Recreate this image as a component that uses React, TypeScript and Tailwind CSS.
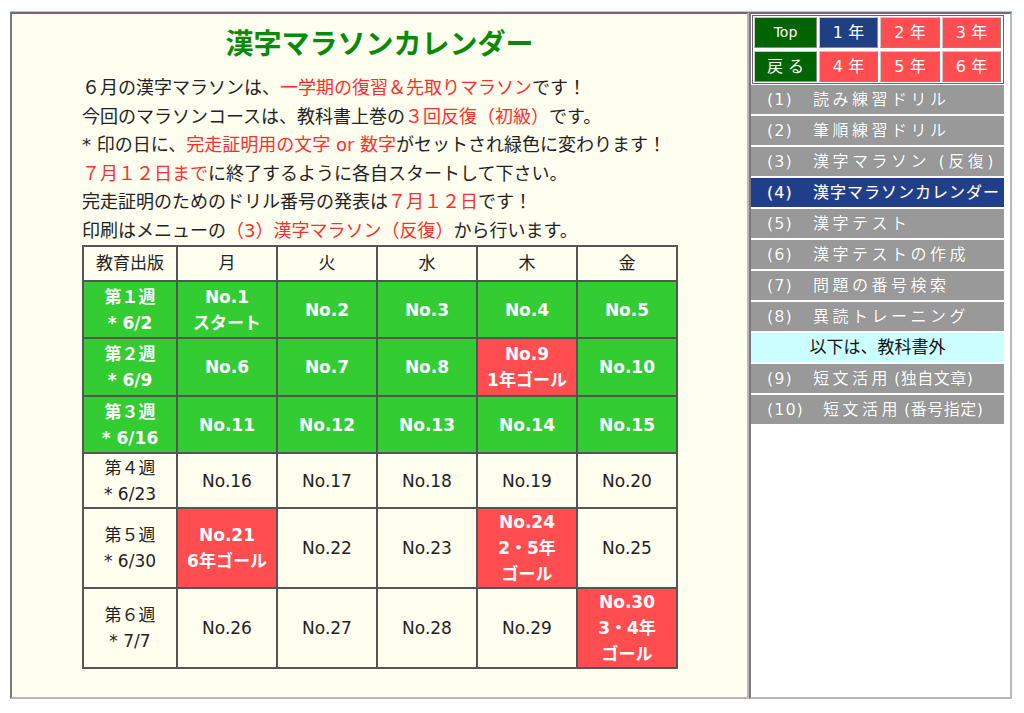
import React from 'react';

type Cell = { lines: string[]; tone?: 'green' | 'red' };

const FONT = '"DejaVu Sans", "Noto Sans CJK JP", sans-serif';

const headers = ['教育出版', '月', '火', '水', '木', '金'];

const weeks: { h: string; cells: Cell[] }[] = [
  {
    h: 'h-[57px]',
    cells: [
      { lines: ['第１週', '* 6/2'], tone: 'green' },
      { lines: ['No.1', 'スタート'], tone: 'green' },
      { lines: ['No.2'], tone: 'green' },
      { lines: ['No.3'], tone: 'green' },
      { lines: ['No.4'], tone: 'green' },
      { lines: ['No.5'], tone: 'green' },
    ],
  },
  {
    h: 'h-[58px]',
    cells: [
      { lines: ['第２週', '* 6/9'], tone: 'green' },
      { lines: ['No.6'], tone: 'green' },
      { lines: ['No.7'], tone: 'green' },
      { lines: ['No.8'], tone: 'green' },
      { lines: ['No.9', '1年ゴール'], tone: 'red' },
      { lines: ['No.10'], tone: 'green' },
    ],
  },
  {
    h: 'h-[57px]',
    cells: [
      { lines: ['第３週', '* 6/16'], tone: 'green' },
      { lines: ['No.11'], tone: 'green' },
      { lines: ['No.12'], tone: 'green' },
      { lines: ['No.13'], tone: 'green' },
      { lines: ['No.14'], tone: 'green' },
      { lines: ['No.15'], tone: 'green' },
    ],
  },
  {
    h: 'h-[55px]',
    cells: [
      { lines: ['第４週', '* 6/23'] },
      { lines: ['No.16'] },
      { lines: ['No.17'] },
      { lines: ['No.18'] },
      { lines: ['No.19'] },
      { lines: ['No.20'] },
    ],
  },
  {
    h: 'h-[79px]',
    cells: [
      { lines: ['第５週', '* 6/30'] },
      { lines: ['No.21', '6年ゴール'], tone: 'red' },
      { lines: ['No.22'] },
      { lines: ['No.23'] },
      { lines: ['No.24', '2・5年', 'ゴール'], tone: 'red' },
      { lines: ['No.25'] },
    ],
  },
  {
    h: 'h-[80px]',
    cells: [
      { lines: ['第６週', '* 7/7'] },
      { lines: ['No.26'] },
      { lines: ['No.27'] },
      { lines: ['No.28'] },
      { lines: ['No.29'] },
      { lines: ['No.30', '3・4年', 'ゴール'], tone: 'red' },
    ],
  },
];

const navTop = [
  { label: 'Top', bg: 'bg-[#006400]' },
  { label: '1 年', bg: 'bg-[#1f3f85]' },
  { label: '2 年', bg: 'bg-[#ff4d50]' },
  { label: '3 年', bg: 'bg-[#ff4d50]' },
  { label: '戻 る', bg: 'bg-[#006400]' },
  { label: '4 年', bg: 'bg-[#ff4d50]' },
  { label: '5 年', bg: 'bg-[#ff4d50]' },
  { label: '6 年', bg: 'bg-[#ff4d50]' },
];

const menu = [
  { no: '(1)', text: '読み練習ドリル' },
  { no: '(2)', text: '筆順練習ドリル' },
  { no: '(3)', text: '漢字マラソン (反復)' },
  { no: '(4)', text: '漢字マラソンカレンダー', active: true },
  { no: '(5)', text: '漢字テスト' },
  { no: '(6)', text: '漢字テストの作成' },
  { no: '(7)', text: '問題の番号検索' },
  { no: '(8)', text: '異読トレーニング' },
];

function R({ children }: { children: React.ReactNode }) {
  return <span className="text-[#ff2e2e]">{children}</span>;
}

function MenuItem({
  no,
  text,
  tail,
  active,
  wide,
}: {
  no: string;
  text: string;
  tail?: string;
  active?: boolean;
  wide?: boolean;
}) {
  return (
    <div
      className={`h-[29px] flex items-center overflow-hidden whitespace-nowrap text-white text-[16px] [text-shadow:0_0_1px_#777] ${
        active ? 'bg-[#1f3f8a]' : 'bg-[#999999]'
      }`}
    >
      <span className={`pl-[16px] shrink-0 tracking-[1px] ${wide ? 'w-[72px]' : 'w-[62px]'}`}>{no}</span>
      <span className={active ? 'tracking-[1px]' : 'tracking-[3.5px]'}>{text}</span>
      {tail && <span className="ml-[3px] tracking-[0.5px]">{tail}</span>}
    </div>
  );
}

export default function App() {
  return (
    <div className="w-[1024px] h-[713px] bg-white pt-[11px] pl-[10px]" style={{ fontFamily: FONT }}>
      <div className="w-[1002px] h-[688px] border-t border-[#9fd4dc] flex">
        {/* left frame */}
        <div className="w-[739px] h-full border-2 border-l-[#7a7a7a] border-t-[#6e6e6e] border-r-[#b8b8b8] border-b-[#b8b8b8] bg-[#fffff0]">
          <h1 className="mt-[13px] text-center text-[28px] leading-[36px] font-bold text-[#0a8a0a]">
            漢字マラソンカレンダー
          </h1>
          <div className="pl-[70px] mt-[11px] text-[18px] leading-[28.5px] text-[#222]">
            <p>６月の漢字マラソンは、<R>一学期の復習＆先取りマラソン</R>です！</p>
            <p>今回のマラソンコースは、教科書上巻の<R>３回反復（初級）</R>です。</p>
            <p>* 印の日に、<R>完走証明用の文字 or 数字</R>がセットされ緑色に変わります！</p>
            <p><R>７月１２日まで</R>に終了するように各自スタートして下さい。</p>
            <p>完走証明のためのドリル番号の発表は<R>７月１２日</R>です！</p>
            <p>印刷はメニューの<R>（3）漢字マラソン（反復）</R>から行います。</p>
          </div>
          <table className="ml-[70px] border-collapse border-2 border-[#555] text-[17px] text-[#222] text-center">
            <thead>
              <tr className="h-[35px]">
                {headers.map((h, i) => (
                  <th
                    key={h}
                    className={`border-2 border-[#555] font-normal ${i === 0 ? 'w-[94px]' : 'w-[100px]'}`}
                  >
                    {h}
                  </th>
                ))}
              </tr>
            </thead>
            <tbody>
              {weeks.map((w, ri) => (
                <tr key={ri} className={w.h}>
                  {w.cells.map((c, ci) => (
                    <td
                      key={ci}
                      className={`border-2 border-[#555] p-0 leading-[26px] ${
                        c.tone === 'green'
                          ? 'bg-[#33cc33] text-white font-bold'
                          : c.tone === 'red'
                            ? 'bg-[#ff4d50] text-white font-bold'
                            : ''
                      }`}
                    >
                      {c.lines.map((l) => (
                        <div key={l}>{l}</div>
                      ))}
                    </td>
                  ))}
                </tr>
              ))}
            </tbody>
          </table>
        </div>

        {/* right frame */}
        <div className="w-[263px] h-full border-2 border-l-[#7a7a7a] border-t-[#6e6e6e] border-r-[#b8b8b8] border-b-[#b8b8b8] bg-white pt-[1px]">
          <div className="w-[252px] ml-[1px] border border-[#666] p-[1px] grid grid-cols-[63px_59px_60px_59px] gap-x-[2px] gap-y-[3px]">
            {navTop.map((n) => (
              <div
                key={n.label}
                className={`h-[31px] flex items-center justify-center border border-t-[#c8c8c8] border-l-[#c8c8c8] border-r-[#8a8a8a] border-b-[#8a8a8a] text-white ${n.bg} ${
                  n.label === 'Top' ? 'text-[14px]' : 'text-[16px]'
                }`}
              >
                {n.label}
              </div>
            ))}
          </div>
          <div className="w-[253px] mt-[1px] flex flex-col gap-[2px]">
            {menu.map((m) => (
              <MenuItem key={m.no} no={m.no} text={m.text} active={m.active} />
            ))}
            <div className="h-[29px] flex items-center justify-center bg-[#ccffff] text-[17px] text-[#111]">
              以下は、教科書外
            </div>
            <MenuItem no="(9)" text="短文活用" tail="(独自文章)" />
            <MenuItem no="(10)" text="短文活用" tail="(番号指定)" wide />
          </div>
        </div>
      </div>
    </div>
  );
}
